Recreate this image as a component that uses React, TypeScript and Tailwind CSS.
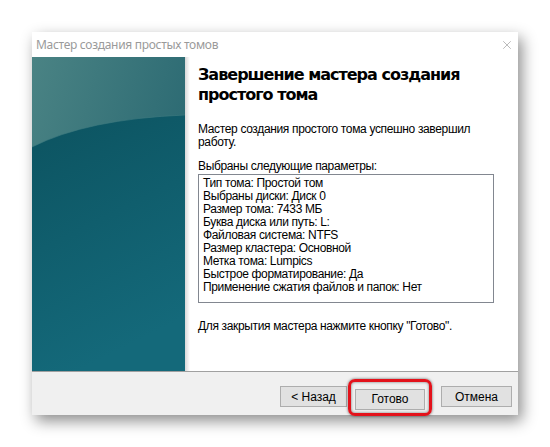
import React from "react";
import { X } from "lucide-react";

const params = [
  "Тип тома: Простой том",
  "Выбраны диски: Диск 0",
  "Размер тома: 7433 МБ",
  "Буква диска или путь: L:",
  "Файловая система: NTFS",
  "Размер кластера: Основной",
  "Метка тома: Lumpics",
  "Быстрое форматирование: Да",
  "Применение сжатия файлов и папок: Нет",
];

const WizardArt: React.FC = () => (
  <svg width="153" height="314" viewBox="0 0 153 314" className="block">
    <defs>
      <linearGradient id="top" x1="0" y1="0" x2="1" y2="0.6">
        <stop offset="0" stopColor="#4a8384" />
        <stop offset="1" stopColor="#276670" />
      </linearGradient>
      <linearGradient id="bottom" x1="0" y1="0" x2="0.3" y2="1">
        <stop offset="0" stopColor="#0c5360" />
        <stop offset="1" stopColor="#14697a" />
      </linearGradient>
    </defs>
    <rect width="153" height="314" fill="url(#top)" />
    <path d="M0 90 Q55 62 153 58 L153 314 L0 314 Z" fill="url(#bottom)" />
    <path d="M0 90 Q55 62 153 58" fill="none" stroke="#3f7c80" strokeWidth="1" opacity="0.6" />
  </svg>
);

const Button: React.FC<{ label: string; className?: string }> = ({ label, className }) => (
  <button
    className={
      "h-[21px] bg-[#e1e1e1] border border-[#adadad] text-[12px] text-black leading-none " +
      (className ?? "")
    }
  >
    {label}
  </button>
);

const App: React.FC = () => {
  return (
    <div
      className="w-[550px] h-[447px] bg-white pt-[32px] pl-[32px] overflow-hidden"
      style={{ fontFamily: '"Liberation Sans", Arial, sans-serif' }}
    >
      <div className="w-[486px] h-[383px] bg-white flex flex-col shadow-[4px_6px_14px_rgba(0,0,0,0.45)]">
        {/* title bar */}
        <div className="h-[25px] flex items-center justify-between pl-[4px] pr-[4px]">
          <span
            className="text-[12px] text-[#9a9a9a] tracking-[-0.3px]"
            style={{ fontFamily: '"Noto Sans", "Open Sans", sans-serif' }}
          >
            Мастер создания простых томов
          </span>
          <X size={14} strokeWidth={1} className="text-[#8a8a8a]" />
        </div>

        {/* body */}
        <div className="h-[314px] flex">
          <WizardArt />
          <div className="w-[5px] bg-gradient-to-r from-[#d8d8d8] to-white" />
          <div className="flex-1 pl-[8px] pr-[24px] pt-[8px] text-[12px] text-black tracking-[-0.35px]">
            <h1
              className="text-[16px] font-bold leading-[20px] text-black whitespace-nowrap tracking-[-1px]"
              style={{ fontFamily: '"DejaVu Sans", Verdana, sans-serif' }}
            >
              Завершение мастера создания
              <br />
              простого тома
            </h1>
            <p className="mt-[18px] leading-[13px]">
              Мастер создания простого тома успешно завершил
              <br />
              работу.
            </p>
            <p className="mt-[11px] leading-[13px]">Выбраны следующие параметры:</p>
            <div className="mt-[1px] h-[129px] border border-[#828790] pl-[4px] pt-[2px]">
              {params.map((p) => (
                <div key={p} className="leading-[13px]">
                  {p}
                </div>
              ))}
            </div>
            <p className="mt-[17px] leading-[13px]">
              Для закрытия мастера нажмите кнопку "Готово".
            </p>
          </div>
        </div>

        {/* footer */}
        <div className="flex-1 bg-[#f0f0f0] border-t border-[#a0a0a0] flex justify-end items-start pt-[14px] pr-[6px]">
          <Button label="< Назад" className="w-[67px]" />
          <div className="relative ml-[8px]">
            <Button label="Готово" className="w-[70px]" />
            <div className="absolute -left-[7px] -right-[7px] -top-[7px] -bottom-[6px] border-[3px] border-[#e3121b] rounded-[7px] shadow-[0_0_3px_rgba(0,0,0,0.6),inset_0_0_3px_rgba(0,0,0,0.5)] pointer-events-none" />
          </div>
          <Button label="Отмена" className="w-[71px] ml-[16px]" />
        </div>
      </div>
    </div>
  );
};

export default App;
